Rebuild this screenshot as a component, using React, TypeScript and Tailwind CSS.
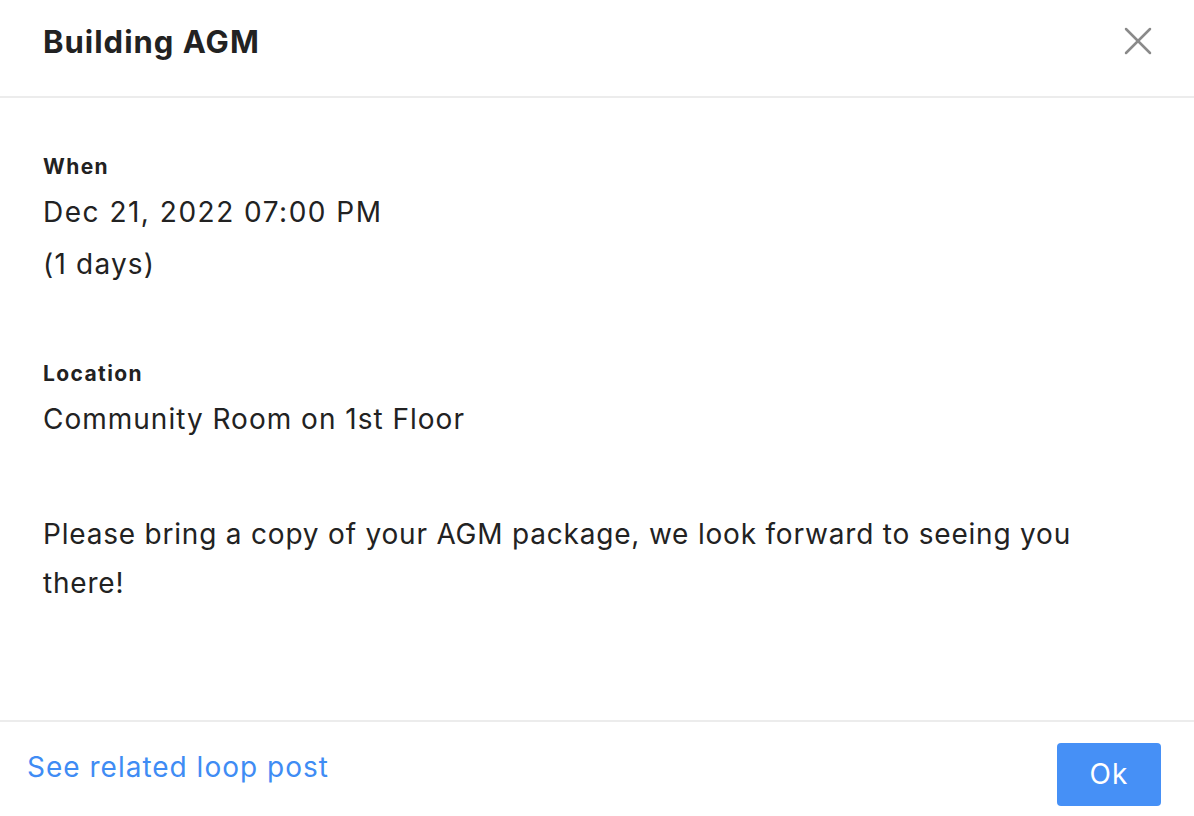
import { X } from 'lucide-react';

const font = { fontFamily: 'Inter, "Open Sans", sans-serif' };

const EventModal = () => {
  return (
    <div className="w-[1194px] h-[816px] bg-white flex flex-col text-[#222]" style={font}>
      <div className="h-[98px] flex items-center justify-between pl-[43px] pr-[32px] border-b-2 border-[#ececec]">
        <h1 className="text-[31px] font-bold leading-none pb-[14px] tracking-[1px]">Building AGM</h1>
        <button className="text-[#8a8a8a] pb-[14px]">
          <X size={48} strokeWidth={1.25} />
        </button>
      </div>

      <div className="flex-1 px-[43px] pt-[55px]">
        <div>
          <p className="text-[21px] font-bold leading-[28px] tracking-[1.4px]">When</p>
          <p className="text-[28px] leading-[52px] mt-[5px] tracking-[1.5px]">Dec 21, 2022 07:00 PM</p>
          <p className="text-[28px] leading-[52px] tracking-[1.2px]">(1 days)</p>
        </div>
        <div className="mt-[70px]">
          <p className="text-[21px] font-bold leading-[28px] tracking-[1.4px]">Location</p>
          <p className="text-[28px] leading-[52px] mt-[5px] tracking-[1px]">Community Room on 1st Floor</p>
        </div>
        <p className="text-[28px] leading-[49px] mt-[65px] max-w-[1080px] tracking-[0.8px]">
          Please bring a copy of your AGM package, we look forward to seeing you there!
        </p>
      </div>

      <div className="h-[96px] border-t-2 border-[#ececec] flex items-center justify-between pl-[27px] pr-[33px]">
        <a className="text-[28px] text-[#3f8cf4] -mt-[4px] tracking-[1px]">See related loop post</a>
        <button className="w-[104px] h-[63px] mt-[10px] rounded-[4px] bg-[#4690f6] text-white text-[28px] tracking-[1px]">
          Ok
        </button>
      </div>
    </div>
  );
};

export default function App() {
  return <EventModal />;
}
